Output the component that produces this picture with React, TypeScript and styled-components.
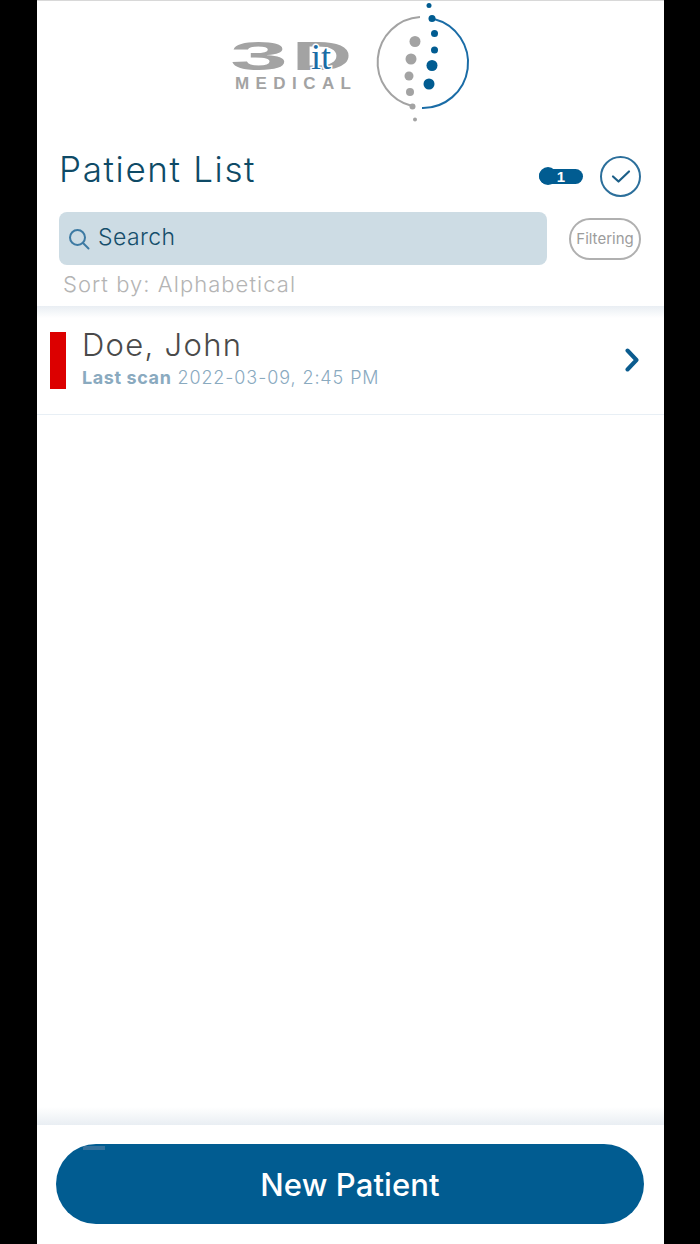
import styled, { createGlobalStyle } from "styled-components";

const GlobalStyle = createGlobalStyle`
  html, body {
    margin: 0;
    padding: 0;
    background: #000;
  }
  * {
    box-sizing: border-box;
  }
`;

const Phone = styled.div`
  width: 627px;
  height: 1244px;
  margin-left: 37px;
  background: #fff;
  display: flex;
  flex-direction: column;
  font-family: Inter, sans-serif;
`;

const Header = styled.header`
  height: 306px;
  flex: none;
  border-top: 1px solid #d8d8d8;
  padding: 0 23px 0 22px;
  display: flex;
  flex-direction: column;
`;

const Logo = styled.svg`
  display: block;
  width: 260px;
  height: 129px;
  margin: 0 0 0 161px;
  flex: none;
`;

const TitleRow = styled.div`
  height: 82px;
  display: flex;
  align-items: center;
`;

const Title = styled.h1`
  margin: 0 auto 4px 0;
  font-size: 35px;
  font-weight: 300;
  letter-spacing: 1.65px;
  color: #0e4a66;
`;

const Badge = styled.div`
  width: 44px;
  height: 15px;
  margin: 10px 17px 0 0;
  position: relative;
  border-radius: 8px;
  background: #015c91;
  color: #fff;
  font-family: "Liberation Sans", sans-serif;
  font-size: 15px;
  font-weight: 700;
  line-height: 15px;
  text-align: center;

  &::before {
    content: "";
    position: absolute;
    left: 0;
    top: -2px;
    width: 18px;
    height: 18px;
    border-radius: 50%;
    background: #015c91;
  }

  span {
    position: relative;
  }
`;

const CheckButton = styled.button`
  width: 41px;
  height: 41px;
  margin-top: 10px;
  padding: 0;
  border: 2px solid #2c6f9b;
  border-radius: 50%;
  background: #fff;
  display: flex;
  align-items: center;
  justify-content: center;
`;

const SearchRow = styled.div`
  display: flex;
  align-items: center;
  justify-content: space-between;
`;

const SearchBox = styled.div`
  width: 488px;
  height: 53px;
  padding-left: 9px;
  border-radius: 8px;
  background: #cddce4;
  display: flex;
  align-items: center;
  gap: 8px;
  color: #154e6b;
  font-size: 23px;
  font-weight: 300;
  letter-spacing: 0.4px;

  span {
    margin-bottom: 3px;
  }
`;

const FilterPill = styled.button`
  width: 72px;
  height: 42px;
  padding: 0;
  border: 2px solid #b0b0b0;
  border-radius: 21px;
  background: #fff;
  color: #9c9c9c;
  font-family: Inter, sans-serif;
  font-size: 15px;
  font-weight: 400;
`;

const SortLabel = styled.div`
  margin: 5px 0 0 4px;
  color: #b4b4b4;
  font-size: 22px;
  font-weight: 300;
  letter-spacing: 1.05px;
  line-height: 28px;
`;

const List = styled.main`
  flex: 1;
  background:
    linear-gradient(#e9eef3, #fff) top / 100% 12px no-repeat,
    linear-gradient(#fff, #e9eef3) bottom / 100% 18px no-repeat,
    #fff;
`;

const PatientRow = styled.div`
  height: 109px;
  padding: 26px 25px 0 13px;
  border-bottom: 1px solid #e8eff5;
  display: flex;
  align-items: flex-start;
`;

const StatusBar = styled.div<{ $color: string }>`
  width: 16px;
  height: 57px;
  flex: none;
  background: ${(p) => p.$color};
`;

const PatientInfo = styled.div`
  flex: 1;
  margin-left: 16px;
`;

const PatientName = styled.div`
  margin-top: -7px;
  color: #4a4a4a;
  font-size: 31px;
  line-height: 40px;
  letter-spacing: 1.3px;
  font-weight: 300;
`;

const LastScan = styled.div`
  margin-top: 1px;
  color: #8aaabf;
  font-size: 18px;
  line-height: 24px;
  letter-spacing: 0.9px;
  font-weight: 300;

  b {
    font-weight: 700;
    letter-spacing: 0.6px;
  }
`;

const Chevron = styled.svg`
  width: 14px;
  height: 24px;
  margin-top: 16px;
  flex: none;
`;

const Footer = styled.footer`
  height: 119px;
  flex: none;
  padding: 19px 20px 0 19px;
`;

const NewPatientButton = styled.button`
  width: 100%;
  height: 80px;
  position: relative;
  padding: 0;
  border: none;
  border-radius: 40px;
  background: #015c91;
  color: #fff;
  font-family: Inter, sans-serif;
  font-size: 31px;
  font-weight: 450;
  letter-spacing: 0.1px;

  &::before {
    content: "";
    position: absolute;
    left: 27px;
    top: 2px;
    width: 22px;
    height: 4px;
    background: #34719c;
  }
`;

const App = () => {
  return (
    <>
      <GlobalStyle />
      <Phone>
        <Header>
          <Logo viewBox="220 0 260 129">
            <text
              x="230"
              y="69"
              fontFamily="Liberation Sans"
              fontWeight="700"
              fontSize="41"
              fill="#a3a3a3"
              textLength="58"
              lengthAdjust="spacingAndGlyphs"
            >
              3
            </text>
            <text
              x="292"
              y="69"
              fontFamily="Liberation Sans"
              fontWeight="700"
              fontSize="41"
              fill="#a3a3a3"
              textLength="60"
              lengthAdjust="spacingAndGlyphs"
            >
              D
            </text>
            <text
              x="311"
              y="68"
              fontFamily="Liberation Serif"
              fontSize="36"
              fill="#1a6ca6"
              stroke="#fff"
              strokeWidth="3"
              paintOrder="stroke"
            >
              it
            </text>
            <text
              x="235"
              y="88"
              fontFamily="Liberation Sans"
              fontWeight="700"
              fontSize="17"
              fill="#a3a3a3"
              textLength="116"
              lengthAdjust="spacing"
            >
              MEDICAL
            </text>
            <path d="M420 16 A45.2 45.2 0 0 0 412 105" fill="none" stroke="#a3a3a3" strokeWidth="2" />
            <path d="M434 18 A45.2 45.2 0 0 1 422 107" fill="none" stroke="#1a6ca6" strokeWidth="2" />
            <g fill="#015c91">
              <circle cx="429" cy="4.5" r="2.5" />
              <circle cx="432" cy="17.5" r="3.5" />
              <circle cx="434.5" cy="32.5" r="3.5" />
              <circle cx="434.5" cy="49" r="3.5" />
              <circle cx="432" cy="64.5" r="5.5" />
              <circle cx="429" cy="83" r="5.5" />
            </g>
            <g fill="#a3a3a3">
              <circle cx="415" cy="40.5" r="5.5" />
              <circle cx="411" cy="58" r="5.5" />
              <circle cx="409" cy="75" r="4.5" />
              <circle cx="410" cy="91" r="4" />
              <circle cx="412.5" cy="105.5" r="3" />
              <circle cx="415" cy="118.5" r="2" />
            </g>
          </Logo>
          <TitleRow>
            <Title>Patient List</Title>
            <Badge>
              <span>1</span>
            </Badge>
            <CheckButton>
              <svg width="20" height="15" viewBox="0 0 20 15">
                <path d="M2 7.5 L7.5 12.5 L18 2.5" fill="none" stroke="#1c5f88" strokeWidth="2.2" strokeLinecap="round" strokeLinejoin="round" />
              </svg>
            </CheckButton>
          </TitleRow>
          <SearchRow>
            <SearchBox>
              <svg width="22" height="22" viewBox="0 0 22 22">
                <circle cx="9.5" cy="9.5" r="7.5" fill="none" stroke="#3d7aa3" strokeWidth="2" />
                <path d="M15 15 L20.5 20.5" stroke="#3d7aa3" strokeWidth="2" strokeLinecap="round" />
              </svg>
              <span>Search</span>
            </SearchBox>
            <FilterPill>Filtering</FilterPill>
          </SearchRow>
          <SortLabel>Sort by: Alphabetical</SortLabel>
        </Header>
        <List>
          <PatientRow>
            <StatusBar $color="#dc0000" />
            <PatientInfo>
              <PatientName>Doe, John</PatientName>
              <LastScan>
                <b>Last scan</b> 2022-03-09, 2:45 PM
              </LastScan>
            </PatientInfo>
            <Chevron viewBox="0 0 14 24">
              <path d="M2.5 2.5 L11.5 12 L2.5 21.5" fill="none" stroke="#0b5c8f" strokeWidth="4" strokeLinecap="round" strokeLinejoin="round" />
            </Chevron>
          </PatientRow>
        </List>
        <Footer>
          <NewPatientButton>New Patient</NewPatientButton>
        </Footer>
      </Phone>
    </>
  );
};

export default App;
